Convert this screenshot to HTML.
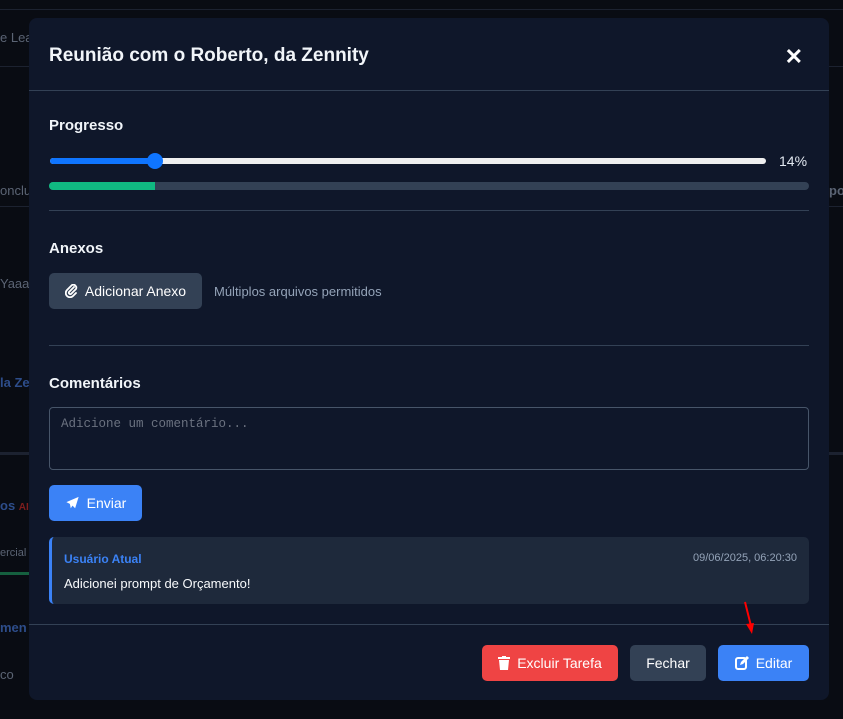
<!DOCTYPE html>
<html><head><meta charset="utf-8"><style>
*{box-sizing:border-box;margin:0;padding:0}
body{width:843px;height:719px;background:#090c13;font-family:"Liberation Sans",sans-serif;position:relative;overflow:hidden;color:#fff}
.bg{position:absolute;color:#5b6474;font-size:13px}
.line{position:absolute;height:1px;background:#1c2230}
.modal{position:absolute;left:29px;top:18px;width:800px;height:682px;background:#0f172a;border-radius:8px}
.hdr{height:73px;border-bottom:1px solid #334155;position:relative}
.hdr h1{position:absolute;left:20px;top:27px;font-size:19px;font-weight:bold;color:#f1f5f9}
.x{position:absolute;right:26px;top:26px;font-size:22px;font-weight:bold;color:#fff}
.h2{position:absolute;left:20px;font-size:15px;font-weight:bold;color:#f1f5f9}
.sep{position:absolute;left:20px;width:760px;height:1px;background:#334155}
.btn{position:absolute;border-radius:5px;font-size:14px;color:#fff;display:flex;align-items:center;justify-content:center;gap:7px}
</style></head><body>
<div class="bg" style="left:0;top:30px">e Lea</div>
<div class="bg" style="left:0;top:183px">onclu</div>
<div class="bg" style="left:0;top:276px">Yaaaa</div>
<div class="bg" style="left:0;top:375px;color:#2d4d8a;font-weight:bold">la Ze</div>
<div class="bg" style="left:0;top:498px;color:#2d4d8a;font-weight:bold">os <span style="color:#7f1d1d;font-size:10px">AI</span></div>
<div class="bg" style="left:0;top:547px;font-size:11px">ercial</div>
<div class="line" style="left:0;top:572px;width:29px;height:3px;background:#15603f"></div>
<div class="bg" style="left:0;top:620px;color:#2d4d8a;font-weight:bold">men</div>
<div class="bg" style="left:0;top:667px">co</div>
<div class="bg" style="left:829px;top:183px;font-weight:bold">po</div>
<div class="line" style="left:0;top:9px;width:843px"></div>
<div class="line" style="left:0;top:66px;width:843px"></div>
<div class="line" style="left:0;top:206px;width:843px"></div>
<div class="line" style="left:0;top:452px;width:843px;height:3px"></div>

<div class="modal">
 <div class="hdr"><h1>Reunião com o Roberto, da Zennity</h1><div class="x">✕</div></div>
 <div class="h2" style="top:99px">Progresso</div>
 <div style="position:absolute;left:21px;top:140px;width:716px;height:6px;border-radius:3px;background:#efefef"></div>
 <div style="position:absolute;left:21px;top:140px;width:105px;height:6px;border-radius:3px;background:#0f75ff"></div>
 <div style="position:absolute;left:118px;top:135px;width:16px;height:16px;border-radius:50%;background:#0f75ff"></div>
 <div style="position:absolute;left:750px;top:135px;font-size:14px;color:#e2e8f0">14%</div>
 <div style="position:absolute;left:20px;top:164px;width:760px;height:8px;border-radius:4px;background:#334155;overflow:hidden"><div style="width:106px;height:8px;background:#10b981"></div></div>
 <div class="sep" style="top:192px"></div>
 <div class="h2" style="top:222px">Anexos</div>
 <div class="btn" style="left:20px;top:255px;width:153px;height:36px;background:#334155"><svg width="13" height="14" viewBox="0 0 13 14"><path d="M9 3L4 8a1.5 1.5 0 0 0 2 2l5-5a3 3 0 0 0-4-4L2 6a4.2 4.2 0 0 0 6 6l3-3" fill="none" stroke="#fff" stroke-width="1.8" stroke-linecap="round"/></svg>Adicionar Anexo</div>
 <div style="position:absolute;left:185px;top:266px;font-size:13px;color:#94a3b8">Múltiplos arquivos permitidos</div>
 <div class="sep" style="top:327px"></div>
 <div class="h2" style="top:357px">Comentários</div>
 <div style="position:absolute;left:20px;top:389px;width:760px;height:63px;border:1px solid #475569;border-radius:4px;font-family:'Liberation Mono',monospace;font-size:12.5px;color:#6b7280;padding:9px 11px">Adicione um comentário...</div>
 <div class="btn" style="left:20px;top:467px;width:93px;height:36px;background:#3b82f6"><svg width="15" height="14" viewBox="0 0 16 16"><path d="M15 1L1 7l4 2 1 5 2-3 3 3z" fill="#fff"/></svg>Enviar</div>
 <div style="position:absolute;left:20px;top:519px;width:760px;height:67px;background:#1e293b;border-radius:5px;border-left:3px solid #3b82f6">
  <div style="position:absolute;left:12px;top:15px;font-size:12px;font-weight:bold;color:#3b82f6">Usuário Atual</div>
  <div style="position:absolute;right:12px;top:15px;font-size:11px;color:#94a3b8">09/06/2025, 06:20:30</div>
  <div style="position:absolute;left:12px;top:39px;font-size:13px;color:#f8fafc">Adicionei prompt de Orçamento!</div>
 </div>
 <div style="position:absolute;left:0;top:606px;width:800px;height:1px;background:#334155"></div>
 <div class="btn" style="left:453px;top:627px;width:136px;height:36px;background:#ef4444"><svg width="12" height="14" viewBox="0 0 12 14"><rect x="0" y="1" width="12" height="2" fill="#fff"/><rect x="4" y="0" width="4" height="2" fill="#fff"/><path d="M1 4h10l-1 10H2z" fill="#fff"/></svg>Excluir Tarefa</div>
 <div class="btn" style="left:601px;top:627px;width:76px;height:36px;background:#334155">Fechar</div>
 <div class="btn" style="left:689px;top:627px;width:91px;height:36px;background:#3b82f6"><svg width="14" height="14" viewBox="0 0 14 14"><rect x="1" y="2" width="10" height="11" rx="2" fill="none" stroke="#fff" stroke-width="2"/><path d="M5 9l1-3 6-6 2 2-6 6z" fill="#fff"/></svg>Editar</div>
</div>
<svg style="position:absolute;left:740px;top:600px" width="20" height="36"><line x1="5" y1="2" x2="11" y2="26" stroke="#f00" stroke-width="2"/><path d="M6 24l8-1-2 11z" fill="#f00"/></svg>
</body></html>
